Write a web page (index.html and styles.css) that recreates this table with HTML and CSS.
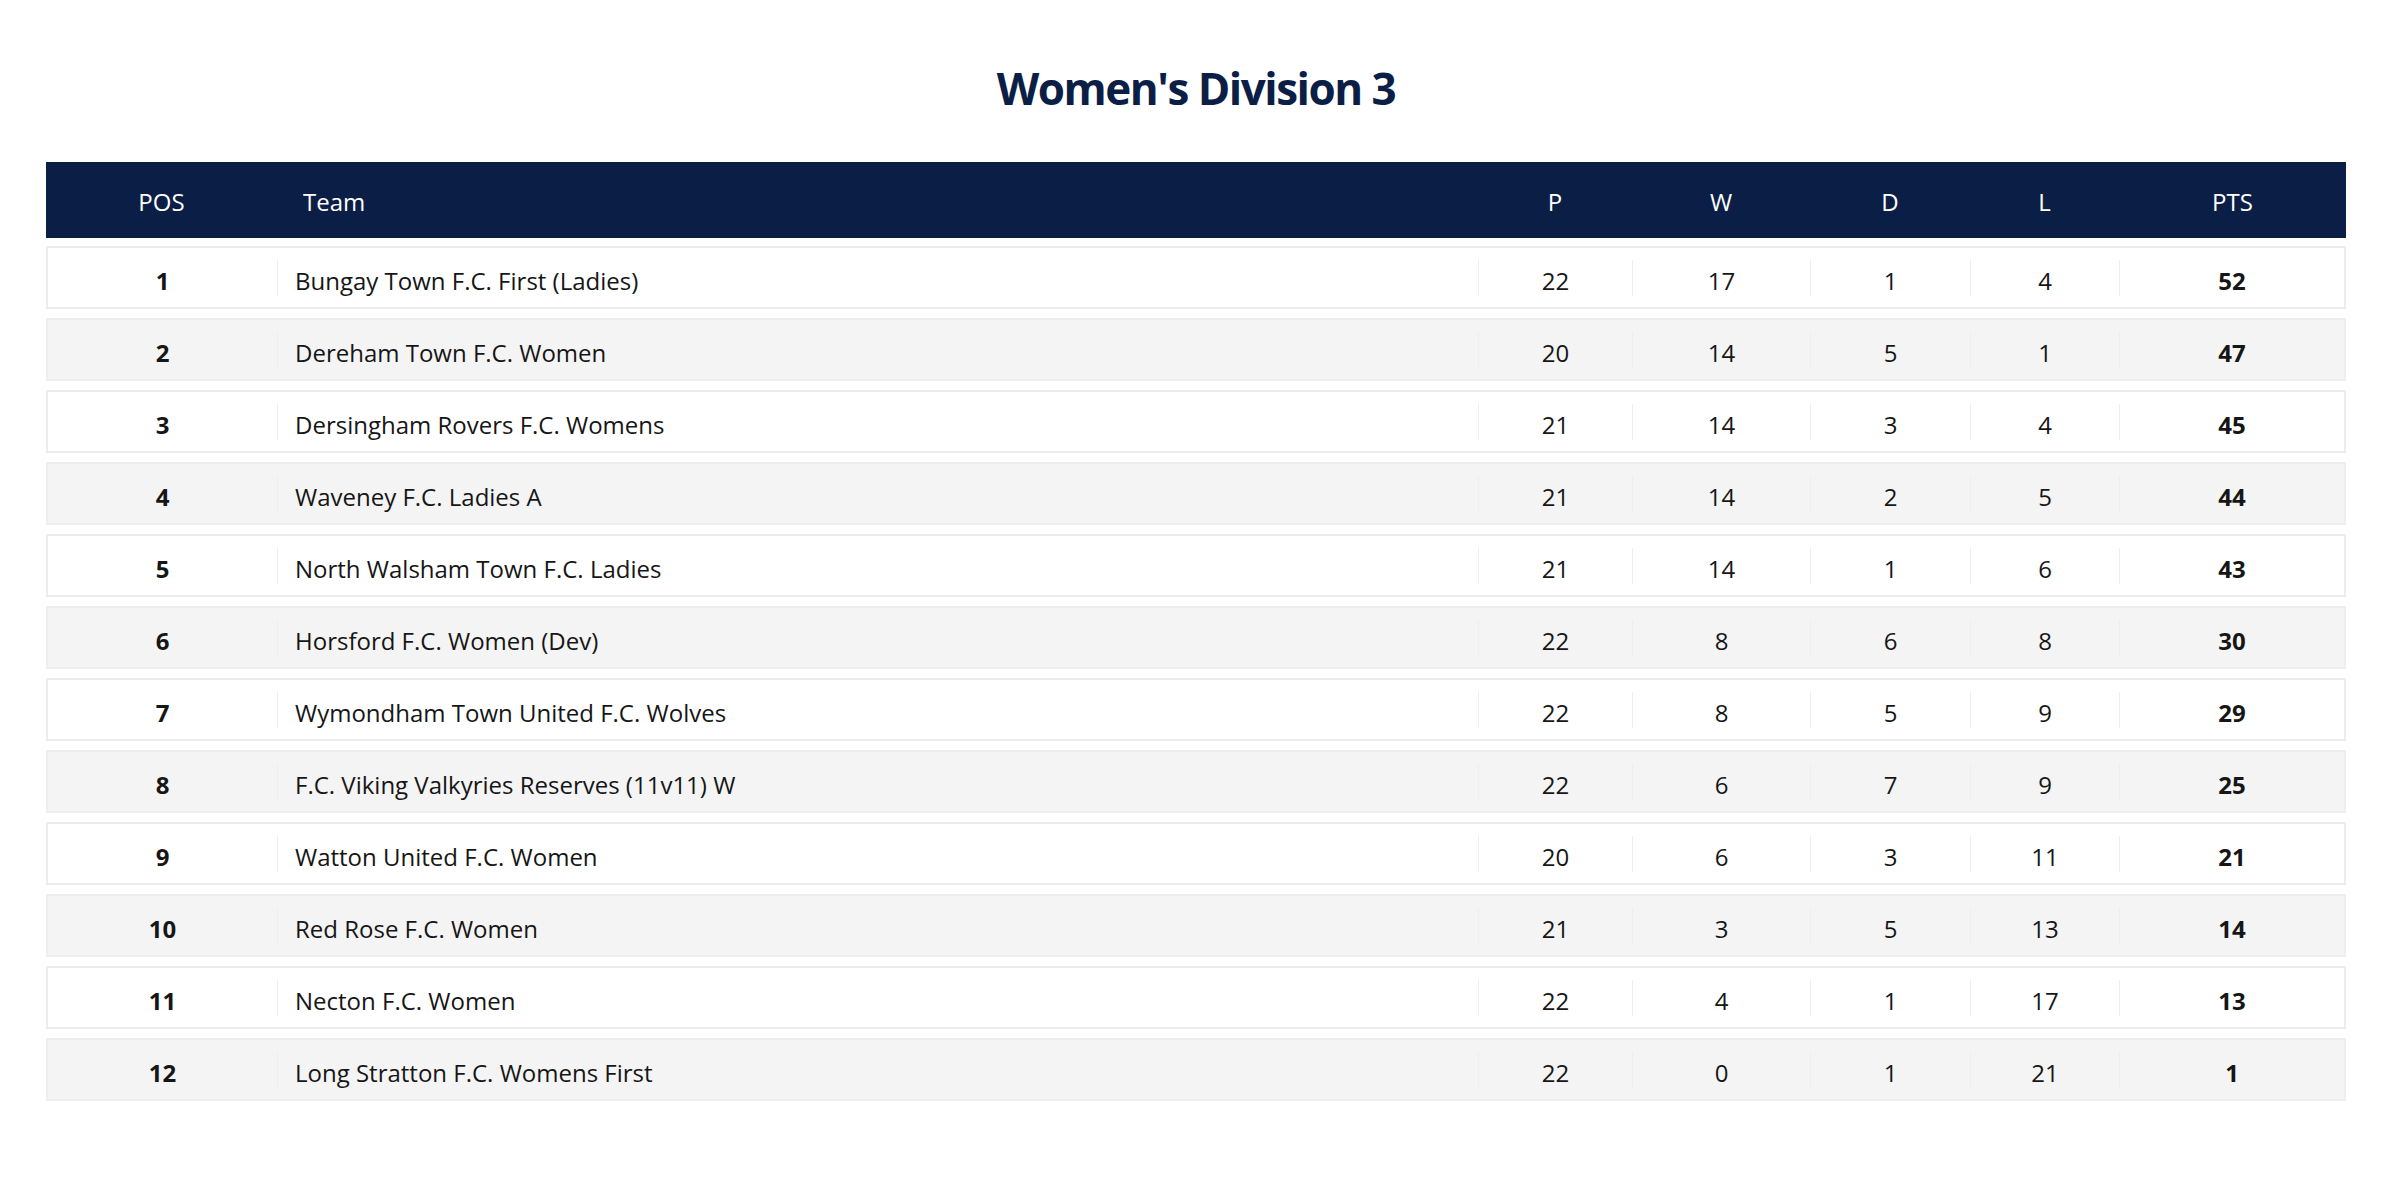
FILE: index.html
```html
<!DOCTYPE html>
<html lang="en">
<head>
<meta charset="utf-8">
<title>Women's Division 3</title>
<link rel="stylesheet" href="styles.css">
</head>
<body>
<main class="page">
  <h1 class="title">Women's Division 3</h1>
  <div class="league">
    <div class="head">
      <div class="hc">POS</div>
      <div class="hc team">Team</div>
      <div class="hc">P</div>
      <div class="hc">W</div>
      <div class="hc">D</div>
      <div class="hc">L</div>
      <div class="hc">PTS</div>
    </div>
    <div class="row"><div class="c pos">1</div><div class="c team">Bungay Town F.C. First (Ladies)</div><div class="c">22</div><div class="c">17</div><div class="c">1</div><div class="c">4</div><div class="c pts">52</div></div>
    <div class="row alt"><div class="c pos">2</div><div class="c team">Dereham Town F.C. Women</div><div class="c">20</div><div class="c">14</div><div class="c">5</div><div class="c">1</div><div class="c pts">47</div></div>
    <div class="row"><div class="c pos">3</div><div class="c team">Dersingham Rovers F.C. Womens</div><div class="c">21</div><div class="c">14</div><div class="c">3</div><div class="c">4</div><div class="c pts">45</div></div>
    <div class="row alt"><div class="c pos">4</div><div class="c team">Waveney F.C. Ladies A</div><div class="c">21</div><div class="c">14</div><div class="c">2</div><div class="c">5</div><div class="c pts">44</div></div>
    <div class="row"><div class="c pos">5</div><div class="c team">North Walsham Town F.C. Ladies</div><div class="c">21</div><div class="c">14</div><div class="c">1</div><div class="c">6</div><div class="c pts">43</div></div>
    <div class="row alt"><div class="c pos">6</div><div class="c team">Horsford F.C. Women (Dev)</div><div class="c">22</div><div class="c">8</div><div class="c">6</div><div class="c">8</div><div class="c pts">30</div></div>
    <div class="row"><div class="c pos">7</div><div class="c team">Wymondham Town United F.C. Wolves</div><div class="c">22</div><div class="c">8</div><div class="c">5</div><div class="c">9</div><div class="c pts">29</div></div>
    <div class="row alt"><div class="c pos">8</div><div class="c team">F.C. Viking Valkyries Reserves (11v11) W</div><div class="c">22</div><div class="c">6</div><div class="c">7</div><div class="c">9</div><div class="c pts">25</div></div>
    <div class="row"><div class="c pos">9</div><div class="c team">Watton United F.C. Women</div><div class="c">20</div><div class="c">6</div><div class="c">3</div><div class="c">11</div><div class="c pts">21</div></div>
    <div class="row alt"><div class="c pos">10</div><div class="c team">Red Rose F.C. Women</div><div class="c">21</div><div class="c">3</div><div class="c">5</div><div class="c">13</div><div class="c pts">14</div></div>
    <div class="row"><div class="c pos">11</div><div class="c team">Necton F.C. Women</div><div class="c">22</div><div class="c">4</div><div class="c">1</div><div class="c">17</div><div class="c pts">13</div></div>
    <div class="row alt"><div class="c pos">12</div><div class="c team">Long Stratton F.C. Womens First</div><div class="c">22</div><div class="c">0</div><div class="c">1</div><div class="c">21</div><div class="c pts">1</div></div>
  </div>
</main>
</body>
</html>
```
FILE: styles.css
```css
html, body {
  margin: 0;
  padding: 0;
  background: #ffffff;
}

body {
  font-family: "Open Sans", "Noto Sans", sans-serif;
  color: #161616;
}

.page {
  width: 2300px;
  padding: 0 0 0 46px;
}

.title {
  margin: 61px 0 47px;
  font-size: 44px;
  line-height: 54px;
  font-weight: 700;
  letter-spacing: -1.5px;
  color: #0b1e45;
  text-align: center;
}

.league {
  display: flex;
  flex-direction: column;
  gap: 9px;
}

.head {
  display: grid;
  grid-template-columns: 231px 1201px 154px 178px 160px 149px 227px;
  height: 76px;
  background: #0b1e45;
  color: #ffffff;
  margin-bottom: -1px;
}

.hc {
  display: flex;
  align-items: center;
  justify-content: center;
  font-size: 24px;
  padding-top: 3px;
}

.hc.team {
  justify-content: flex-start;
  padding-left: 26px;
}

.row {
  box-sizing: border-box;
  display: grid;
  grid-template-columns: 229px 1201px 154px 178px 160px 149px 225px;
  align-items: center;
  height: 63px;
  border: 2px solid #ececec;
  background: #ffffff;
}

.row.alt {
  background: #f4f4f4;
  border-color: #eeeeee;
}

.c {
  display: flex;
  align-items: center;
  justify-content: center;
  height: 36px;
  border-left: 1px solid #eeeeee;
  font-size: 24px;
  padding-top: 5px;
  box-sizing: border-box;
}

.c.pos {
  border-left: none;
  font-weight: 700;
}

.c.team {
  justify-content: flex-start;
  padding-left: 17px;
}

.c.pts {
  font-weight: 700;
}
```
